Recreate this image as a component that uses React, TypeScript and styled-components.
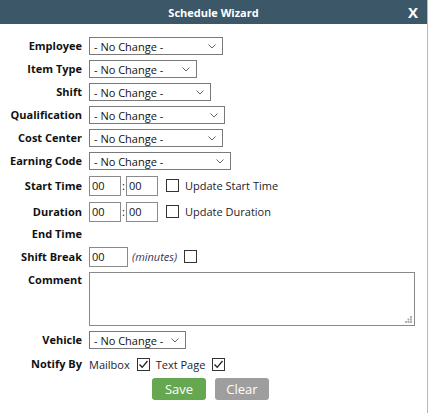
import React from "react";
import styled, { createGlobalStyle } from "styled-components";

const GlobalStyle = createGlobalStyle`
  html, body {
    margin: 0;
    padding: 0;
    background: #ffffff;
  }

  body {
    font-family: "Open Sans", "Liberation Sans", sans-serif;
    color: #111111;
  }

  * {
    box-sizing: border-box;
  }
`;

const Dialog = styled.div`
  width: 428px;
  height: 413px;
  background: #ffffff;
  border-right: 1px solid #b8b8b8;
  display: flex;
  flex-direction: column;
`;

const TitleBar = styled.div`
  height: 24px;
  background-color: #3c5767;
  color: #ffffff;
  display: flex;
  align-items: center;
  justify-content: center;
  position: relative;
  font-size: 11px;
  font-weight: 700;
`;

const CloseButton = styled.span`
  position: absolute;
  right: 9px;
  top: 3px;
  font-size: 15px;
  font-weight: 700;
  line-height: 18px;
  cursor: pointer;
`;

const Form = styled.div`
  display: grid;
  grid-template-columns: 82px 1fr;
  column-gap: 7px;
  row-gap: 5px;
  padding-top: 13px;
`;

const Label = styled.div<{ $top?: boolean }>`
  font-size: 11px;
  font-weight: 700;
  text-align: right;
  white-space: nowrap;
  align-self: ${(p) => (p.$top ? "start" : "center")};
  line-height: 14px;
  padding-top: ${(p) => (p.$top ? "1px" : "0")};
`;

const Field = styled.div<{ $h?: number }>`
  display: flex;
  align-items: center;
  min-height: ${(p) => p.$h ?? 18}px;
`;

const SelectWrap = styled.div<{ $w: number }>`
  position: relative;
  width: ${(p) => p.$w}px;
  height: 18px;
`;

const Select = styled.select`
  appearance: none;
  display: block;
  width: 100%;
  height: 100%;
  border: 1px solid #7a7a7a;
  border-radius: 0;
  background: #ffffff;
  font-family: "Open Sans", "Liberation Sans", sans-serif;
  font-size: 11px;
  color: #111111;
  padding: 0 0 0 4px;
  outline: none;
`;

const Chevron = styled.svg`
  position: absolute;
  right: 7px;
  top: 7px;
  pointer-events: none;
`;

const TimeInput = styled.input<{ $w?: number }>`
  display: block;
  width: ${(p) => p.$w ?? 32}px;
  height: 20px;
  border: 1px solid #8a8a8a;
  font-family: "Open Sans", "Liberation Sans", sans-serif;
  font-size: 11px;
  color: #111111;
  padding: 0 2px;
  outline: none;
`;

const Colon = styled.span`
  font-size: 11px;
  width: 5px;
  text-align: center;
`;

const Text = styled.span<{ $italic?: boolean; $ml?: number }>`
  font-size: 11px;
  color: ${(p) => (p.$italic ? "#3b3358" : "#1c1c2c")};
  font-style: ${(p) => (p.$italic ? "italic" : "normal")};
  margin-left: ${(p) => p.$ml ?? 0}px;
  white-space: nowrap;
`;

const Box = styled.span<{ $ml?: number }>`
  width: 13px;
  height: 13px;
  border: 1px solid #333333;
  background: #ffffff;
  display: inline-flex;
  align-items: center;
  justify-content: center;
  margin-left: ${(p) => p.$ml ?? 0}px;
  flex-shrink: 0;
`;

const CommentWrap = styled.div`
  position: relative;
  width: 326px;
  height: 54px;
`;

const Comment = styled.textarea`
  display: block;
  width: 100%;
  height: 100%;
  border: 1px solid #8a8a8a;
  resize: none;
  outline: none;
  font-family: "Open Sans", "Liberation Sans", sans-serif;
  font-size: 11px;
`;

const Grip = styled.svg`
  position: absolute;
  right: 3px;
  bottom: 3px;
  pointer-events: none;
`;

const Buttons = styled.div`
  display: flex;
  gap: 9px;
  padding-left: 152px;
  margin-top: 4px;
`;

const Button = styled.button<{ $tone: "save" | "clear" }>`
  width: 54px;
  height: 22px;
  border: none;
  border-radius: 3px;
  background: ${(p) => (p.$tone === "save" ? "#66a851" : "#9e9e9e")};
  color: #ffffff;
  font-family: "Open Sans", "Liberation Sans", sans-serif;
  font-size: 13px;
  padding: 0;
  cursor: pointer;
`;

const DropDown: React.FC<{ width: number }> = ({ width }) => (
  <SelectWrap $w={width}>
    <Select defaultValue="nc">
      <option value="nc">- No Change -</option>
    </Select>
    <Chevron width="8" height="5" viewBox="0 0 8 5">
      <path d="M0.5 0.5 L4 4 L7.5 0.5" fill="none" stroke="#666" strokeWidth="1" />
    </Chevron>
  </SelectWrap>
);

const CheckBox: React.FC<{ checked?: boolean; ml?: number }> = ({ checked, ml }) => (
  <Box $ml={ml}>
    {checked && (
      <svg width="11" height="11" viewBox="0 0 11 11">
        <path d="M1.5 5.5 L4.2 8.3 L9.5 2" fill="none" stroke="#222" strokeWidth="1.3" />
      </svg>
    )}
  </Box>
);

const selects: { label: string; width: number }[] = [
  { label: "Employee", width: 134 },
  { label: "Item Type", width: 108 },
  { label: "Shift", width: 122 },
  { label: "Qualification", width: 136 },
  { label: "Cost Center", width: 134 },
  { label: "Earning Code", width: 142 },
];

export default function App() {
  return (
    <>
      <GlobalStyle />
      <Dialog>
        <TitleBar>
          Schedule Wizard
          <CloseButton>X</CloseButton>
        </TitleBar>

        <Form>
          {selects.map((s) => (
            <React.Fragment key={s.label}>
              <Label>{s.label}</Label>
              <Field>
                <DropDown width={s.width} />
              </Field>
            </React.Fragment>
          ))}

          <Label>Start Time</Label>
          <Field $h={21}>
            <TimeInput defaultValue="00" />
            <Colon>:</Colon>
            <TimeInput defaultValue="00" />
            <CheckBox ml={8} />
            <Text $ml={6}>Update Start Time</Text>
          </Field>

          <Label>Duration</Label>
          <Field $h={21}>
            <TimeInput defaultValue="00" />
            <Colon>:</Colon>
            <TimeInput defaultValue="00" />
            <CheckBox ml={8} />
            <Text $ml={6}>Update Duration</Text>
          </Field>

          <Label>End Time</Label>
          <Field $h={14} />

          <Label>Shift Break</Label>
          <Field $h={21}>
            <TimeInput $w={39} defaultValue="00" />
            <Text $italic $ml={4}>
              (minutes)
            </Text>
            <CheckBox ml={7} />
          </Field>

          <Label $top>Comment</Label>
          <Field>
            <CommentWrap>
              <Comment />
              <Grip width="7" height="7" viewBox="0 0 7 7">
                <rect x="5" y="0" width="2" height="2" fill="#b0b0b0" />
                <rect x="2.5" y="2.5" width="2" height="2" fill="#b0b0b0" />
                <rect x="5" y="2.5" width="2" height="2" fill="#b0b0b0" />
                <rect x="0" y="5" width="2" height="2" fill="#b0b0b0" />
                <rect x="2.5" y="5" width="2" height="2" fill="#b0b0b0" />
                <rect x="5" y="5" width="2" height="2" fill="#b0b0b0" />
              </Grip>
            </CommentWrap>
          </Field>

          <Label>Vehicle</Label>
          <Field>
            <DropDown width={97} />
          </Field>

          <Label>Notify By</Label>
          <Field $h={20}>
            <Text>Mailbox</Text>
            <CheckBox checked ml={7} />
            <Text $ml={6}>Text Page</Text>
            <CheckBox checked ml={7} />
          </Field>
        </Form>

        <Buttons>
          <Button $tone="save">Save</Button>
          <Button $tone="clear">Clear</Button>
        </Buttons>
      </Dialog>
    </>
  );
}
